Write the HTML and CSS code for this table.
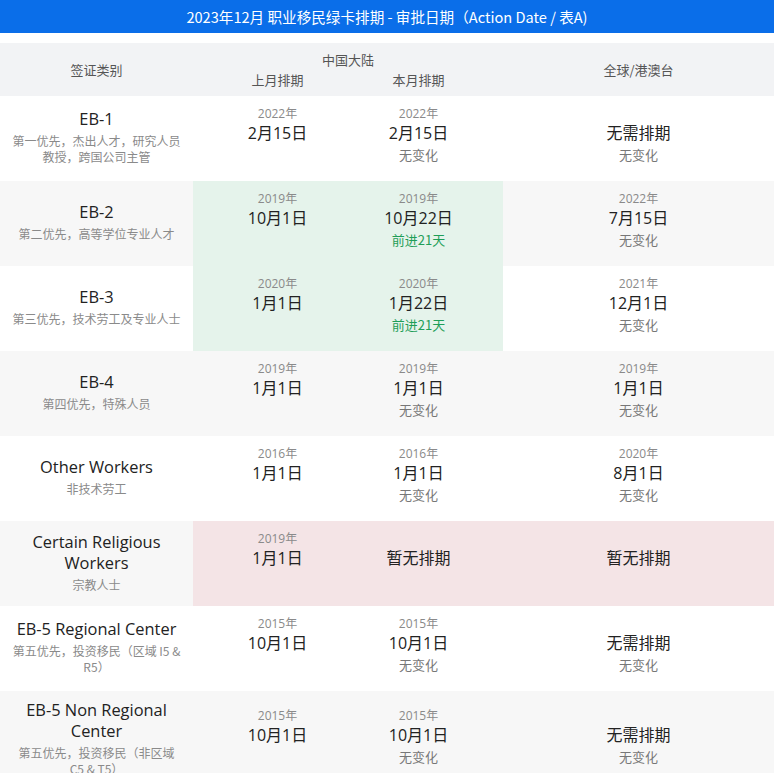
FILE: index.html
```html
<!DOCTYPE html>
<html lang="zh">
<head>
<meta charset="utf-8">
<title>2023年12月 职业移民绿卡排期</title>
<link rel="stylesheet" href="styles.css">
</head>
<body>
<div class="page">
  <div class="title">2023年12月 职业移民绿卡排期 - 审批日期（Action Date / 表A)</div>
  <div class="gap"></div>
  <div class="head">
    <div class="hcat">签证类别</div>
    <div class="hcn">
      <div class="hcn-top">中国大陆</div>
      <div class="hcn-sub"><span>上月排期</span><span>本月排期</span></div>
    </div>
    <div class="hglobal">全球/港澳台</div>
  </div>

  <div class="row">
    <div class="cat"><div class="name">EB-1</div><div class="desc">第一优先，杰出人才，研究人员<br>教授，跨国公司主管</div></div>
    <div class="cn">
      <div class="date"><div class="yr">2022年</div><div class="d">2月15日</div><div class="chg"></div></div>
      <div class="date"><div class="yr">2022年</div><div class="d">2月15日</div><div class="chg">无变化</div></div>
    </div>
    <div class="gl"><div class="date"><div class="yr"></div><div class="d">无需排期</div><div class="chg">无变化</div></div></div>
  </div>

  <div class="row alt">
    <div class="cat"><div class="name">EB-2</div><div class="desc">第二优先，高等学位专业人才</div></div>
    <div class="cn green">
      <div class="date"><div class="yr">2019年</div><div class="d">10月1日</div><div class="chg"></div></div>
      <div class="date"><div class="yr">2019年</div><div class="d">10月22日</div><div class="chg up">前进21天</div></div>
    </div>
    <div class="gl"><div class="date"><div class="yr">2022年</div><div class="d">7月15日</div><div class="chg">无变化</div></div></div>
  </div>

  <div class="row">
    <div class="cat"><div class="name">EB-3</div><div class="desc">第三优先，技术劳工及专业人士</div></div>
    <div class="cn green">
      <div class="date"><div class="yr">2020年</div><div class="d">1月1日</div><div class="chg"></div></div>
      <div class="date"><div class="yr">2020年</div><div class="d">1月22日</div><div class="chg up">前进21天</div></div>
    </div>
    <div class="gl"><div class="date"><div class="yr">2021年</div><div class="d">12月1日</div><div class="chg">无变化</div></div></div>
  </div>

  <div class="row alt">
    <div class="cat"><div class="name">EB-4</div><div class="desc">第四优先，特殊人员</div></div>
    <div class="cn">
      <div class="date"><div class="yr">2019年</div><div class="d">1月1日</div><div class="chg"></div></div>
      <div class="date"><div class="yr">2019年</div><div class="d">1月1日</div><div class="chg">无变化</div></div>
    </div>
    <div class="gl"><div class="date"><div class="yr">2019年</div><div class="d">1月1日</div><div class="chg">无变化</div></div></div>
  </div>

  <div class="row">
    <div class="cat"><div class="name">Other Workers</div><div class="desc">非技术劳工</div></div>
    <div class="cn">
      <div class="date"><div class="yr">2016年</div><div class="d">1月1日</div><div class="chg"></div></div>
      <div class="date"><div class="yr">2016年</div><div class="d">1月1日</div><div class="chg">无变化</div></div>
    </div>
    <div class="gl"><div class="date"><div class="yr">2020年</div><div class="d">8月1日</div><div class="chg">无变化</div></div></div>
  </div>

  <div class="row alt">
    <div class="cat"><div class="name">Certain Religious<br>Workers</div><div class="desc">宗教人士</div></div>
    <div class="cn pink">
      <div class="date"><div class="yr">2019年</div><div class="d">1月1日</div><div class="chg"></div></div>
      <div class="date"><div class="yr"></div><div class="d">暂无排期</div><div class="chg"></div></div>
    </div>
    <div class="gl pink"><div class="date"><div class="yr"></div><div class="d">暂无排期</div><div class="chg"></div></div></div>
  </div>

  <div class="row">
    <div class="cat"><div class="name">EB-5 Regional Center</div><div class="desc">第五优先，投资移民（区域 I5 &amp;<br>R5）</div></div>
    <div class="cn">
      <div class="date"><div class="yr">2015年</div><div class="d">10月1日</div><div class="chg"></div></div>
      <div class="date"><div class="yr">2015年</div><div class="d">10月1日</div><div class="chg">无变化</div></div>
    </div>
    <div class="gl"><div class="date"><div class="yr"></div><div class="d">无需排期</div><div class="chg">无变化</div></div></div>
  </div>

  <div class="row alt">
    <div class="cat"><div class="name">EB-5 Non Regional<br>Center</div><div class="desc">第五优先，投资移民（非区域<br>C5 &amp; T5）</div></div>
    <div class="cn">
      <div class="date"><div class="yr">2015年</div><div class="d">10月1日</div><div class="chg"></div></div>
      <div class="date"><div class="yr">2015年</div><div class="d">10月1日</div><div class="chg">无变化</div></div>
    </div>
    <div class="gl"><div class="date"><div class="yr"></div><div class="d">无需排期</div><div class="chg">无变化</div></div></div>
  </div>
</div>
</body>
</html>
```

FILE: styles.css
```css
html, body {
  margin: 0;
  padding: 0;
  background: #ffffff;
}
.page {
  width: 774px;
  font-family: "Open Sans", "Noto Sans CJK SC", sans-serif;
  color: #222;
}
.title {
  height: 33px;
  background: #0a6ee9;
  color: #ffffff;
  font-family: "Noto Sans CJK SC", sans-serif;
  font-size: 14.6px;
  line-height: 33px;
  text-align: center;
}
.gap {
  height: 10px;
}
.head {
  display: grid;
  grid-template-columns: 193px 310px 271px;
  height: 53px;
  background: #f2f3f5;
  color: #555;
  font-family: "Noto Sans CJK SC", sans-serif;
  font-size: 13px;
}
.hcat, .hglobal {
  display: flex;
  align-items: center;
  justify-content: center;
}
.hcn {
  display: flex;
  flex-direction: column;
  align-items: center;
  padding-top: 7px;
}
.hcn-top {
  line-height: 20px;
}
.hcn-sub {
  display: flex;
  line-height: 20px;
}
.hcn-sub span {
  width: 141px;
  text-align: center;
}
.row {
  display: grid;
  grid-template-columns: 193px 310px 271px;
  min-height: 85px;
  background: #ffffff;
}
.row.alt {
  background: #f7f7f7;
}
.cat {
  display: flex;
  flex-direction: column;
  justify-content: center;
  align-items: center;
  text-align: center;
  padding: 8px 8px 12px;
}
.name {
  font-size: 16.4px;
  line-height: 21px;
  color: #222;
}
.desc {
  margin-top: 4px;
  font-family: "Noto Sans CJK SC", sans-serif;
  font-size: 12px;
  line-height: 16px;
  color: #8a8a8a;
}
.cn {
  display: flex;
  justify-content: center;
  align-items: center;
}
.gl {
  display: flex;
  justify-content: center;
  align-items: center;
}
.green {
  background: #e5f3eb;
}
.pink {
  background: #f4e4e6;
}
.date {
  width: 141px;
  text-align: center;
  padding-bottom: 5px;
}
.yr {
  height: 18px;
  font-size: 12px;
  line-height: 18px;
  color: #8a8a8a;
}
.d {
  height: 20px;
  font-size: 16px;
  line-height: 20px;
  color: #222;
}
.chg {
  height: 24px;
  font-family: "Noto Sans CJK SC", sans-serif;
  font-size: 13px;
  line-height: 24px;
  color: #777;
}
.chg.up {
  color: #1f9e58;
}
```
